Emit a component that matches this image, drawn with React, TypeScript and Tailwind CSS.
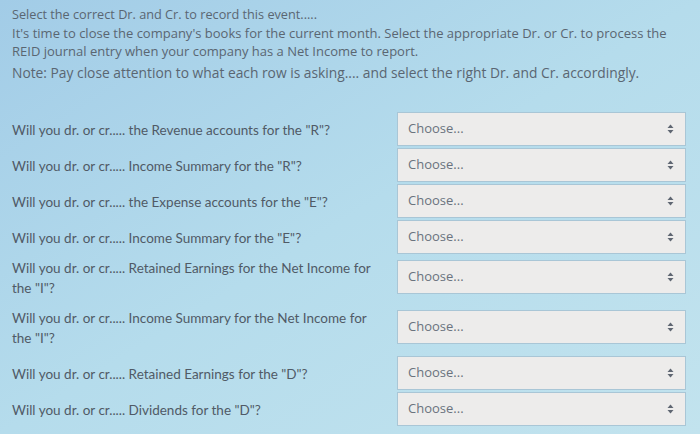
import React from 'react';

const QUESTIONS = [
  { label: 'Will you dr. or cr..... the Revenue accounts for the "R"?', row: 'h-[36px]' },
  { label: 'Will you dr. or cr..... Income Summary for the "R"?', row: 'h-[36px]' },
  { label: 'Will you dr. or cr..... the Expense accounts for the "E"?', row: 'h-[36px]' },
  { label: 'Will you dr. or cr..... Income Summary for the "E"?', row: 'h-[36px]' },
  {
    label: 'Will you dr. or cr..... Retained Earnings for the Net Income for the "I"?',
    row: 'h-[44px]',
  },
  {
    label: 'Will you dr. or cr..... Income Summary for the Net Income for the "I"?',
    row: 'h-[56px]',
  },
  { label: 'Will you dr. or cr..... Retained Earnings for the "D"?', row: 'h-[36px]' },
  { label: 'Will you dr. or cr..... Dividends for the "D"?', row: 'h-[36px]' },
];

function SortIcon() {
  return (
    <svg width="7" height="10" viewBox="0 0 7 10" className="text-[#5f6672]">
      <path d="M3.5 0.5 L6.5 4 L0.5 4 Z" fill="currentColor" />
      <path d="M3.5 9.5 L6.5 6 L0.5 6 Z" fill="currentColor" />
    </svg>
  );
}

export default function App() {
  return (
    <div className="w-[700px] h-[434px] overflow-hidden bg-gradient-to-br from-[#a2cce7] via-[#b5dcec] to-[#c2e3ee] text-[#56606b]">
      <div className="px-3 pt-[6px] font-['Open_Sans',sans-serif]">
        <p className="text-[12.7px] leading-[17px] text-[#5a6672]">
          Select the correct Dr. and Cr. to record this event.....
        </p>
        <p className="mt-[1px] text-[13px] leading-[18px] text-[#5a6672]">
          It's time to close the company's books for the current month. Select the appropriate
          Dr. or Cr. to process the REID journal entry when your company has a Net Income to
          report.
        </p>
        <p className="mt-[4px] text-[13.8px] leading-[18px] text-[#5a6672]">
          Note: Pay close attention to what each row is asking.... and select the right Dr. and
          Cr. accordingly.
        </p>

        <div className="mt-[29px] flex flex-col">
          {QUESTIONS.map((q) => (
            <div key={q.label} className={`flex items-center ${q.row}`}>
              <div className="w-[385px] pr-3 pt-[2px] font-['Lato',sans-serif] text-[13.5px] leading-[20px] text-[#505a66]">
                {q.label}
              </div>
              <div className="flex h-[34px] w-[289px] items-center justify-between border border-[#a9c6d6] bg-[#edeceb] pl-[10px] pr-[11px]">
                <span className="text-[13px] text-[#6a737e]">Choose...</span>
                <SortIcon />
              </div>
            </div>
          ))}
        </div>
      </div>
    </div>
  );
}
